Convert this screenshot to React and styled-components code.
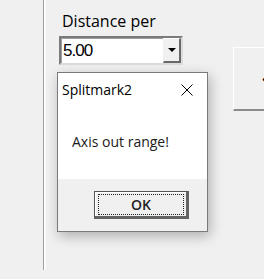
import React from "react";
import styled, { createGlobalStyle } from "styled-components";

const Global = createGlobalStyle`
  html, body { margin: 0; padding: 0; background: #f0f0f0; }
  body { font-family: "Open Sans", "Noto Sans", sans-serif; color: #000; }
`;

const Page = styled.div`
  position: relative;
  display: flex;
  align-items: flex-start;
  width: 264px;
  height: 279px;
  overflow: hidden;
  background: #f0f0f0;
`;

const SidePane = styled.div`
  width: 43px;
  height: 270px;
  flex: none;
  border-right: 1px solid #a0a0a0;
  box-shadow: 1px 0 0 #ffffff, 2px 0 0 #fafafa;
`;

const Field = styled.div`
  display: flex;
  flex-direction: column;
  flex: none;
  margin-left: 15px;
  padding-top: 10px;
`;

const Label = styled.div`
  font-size: 16px;
  line-height: 22px;
  padding-left: 3px;
  color: #000;
  margin-bottom: 4px;
`;

const Combo = styled.div`
  display: flex;
  width: 120px;
  height: 25px;
  background: #fff;
  border: 2px solid;
  border-color: #7a7a7a #dcdcdc #dcdcdc #7a7a7a;
  box-shadow: inset 1px 1px 0 #a0a0a0;
`;

const ComboText = styled.div`
  flex: 1;
  font-family: "Liberation Sans", Arial, sans-serif;
  font-size: 17px;
  letter-spacing: -1px;
  line-height: 25px;
  padding-left: 2px;
`;

const DropButton = styled.div`
  width: 18px;
  display: flex;
  align-items: center;
  justify-content: center;
  background: #f0f0f0;
  border-right: 2px solid #696969;
  border-bottom: 2px solid #696969;
  border-left: 1px solid #f0f0f0;
  border-top: 1px solid #ffffff;
  box-sizing: border-box;
  height: 25px;
`;

const Arrow = styled.div`
  width: 0;
  height: 0;
  border-left: 4px solid transparent;
  border-right: 4px solid transparent;
  border-top: 4px solid #000;
`;

const SideButton = styled.div`
  flex: none;
  margin-left: 50px;
  margin-top: 47px;
  width: 50px;
  height: 64px;
  box-sizing: border-box;
  background: #f0f0f0;
  border-top: 1px solid #ffffff;
  border-left: 1px solid #ffffff;
  border-bottom: 2px solid #8a8a8a;
  display: flex;
  align-items: center;
  padding-left: 28px;
  font-family: "DejaVu Sans", sans-serif;
  font-size: 14px;
  line-height: 1;
`;

const Dialog = styled.div`
  position: absolute;
  left: 57px;
  top: 72px;
  width: 149px;
  height: 158px;
  border: 1px solid #7a7a7a;
  background: #fff;
  display: flex;
  flex-direction: column;
  box-shadow: 2px 4px 12px rgba(0, 0, 0, 0.28);
`;

const TitleBar = styled.div`
  display: flex;
  align-items: center;
  justify-content: space-between;
  height: 32px;
  padding: 0 14px 0 4px;
  font-size: 14px;
  color: #000;
`;

const Close = styled.svg`
  width: 12px;
  height: 12px;
  margin-top: 1px;
`;

const Message = styled.div`
  flex: 1;
  padding: 27px 0 0 14px;
  font-size: 14px;
  color: #1a1a1a;
`;

const Footer = styled.div`
  height: 52px;
  background: #f0f0f0;
  display: flex;
  justify-content: flex-end;
  align-items: flex-start;
  padding: 12px 18px 0 0;
  box-sizing: border-box;
`;

const OkButton = styled.div`
  width: 95px;
  height: 28px;
  box-sizing: border-box;
  background: #f0f0f0;
  border: 1px solid #555;
  border-right: 3px solid #646464;
  border-bottom: 3px solid #646464;
  box-shadow: inset 1px 1px 0 #ffffff;
  padding: 2px 2px 1px 3px;
`;

const Focus = styled.div`
  height: 100%;
  border: 1px dotted #222;
  display: flex;
  align-items: center;
  justify-content: center;
  font-size: 14px;
  font-weight: 600;
  color: #222;
  box-sizing: border-box;
`;

const App = () => (
  <Page>
    <Global />
    <SidePane />
    <Field>
      <Label>Distance per</Label>
      <Combo>
        <ComboText>5.00</ComboText>
        <DropButton>
          <Arrow />
        </DropButton>
      </Combo>
    </Field>
    <SideButton>←</SideButton>
    <Dialog>
      <TitleBar>
        <span>Splitmark2</span>
        <Close viewBox="0 0 12 12">
          <path d="M0.5 0.5 L11.5 11.5 M11.5 0.5 L0.5 11.5" stroke="#000" strokeWidth="1" fill="none" />
        </Close>
      </TitleBar>
      <Message>Axis out range!</Message>
      <Footer>
        <OkButton>
          <Focus>OK</Focus>
        </OkButton>
      </Footer>
    </Dialog>
  </Page>
);

export default App;
